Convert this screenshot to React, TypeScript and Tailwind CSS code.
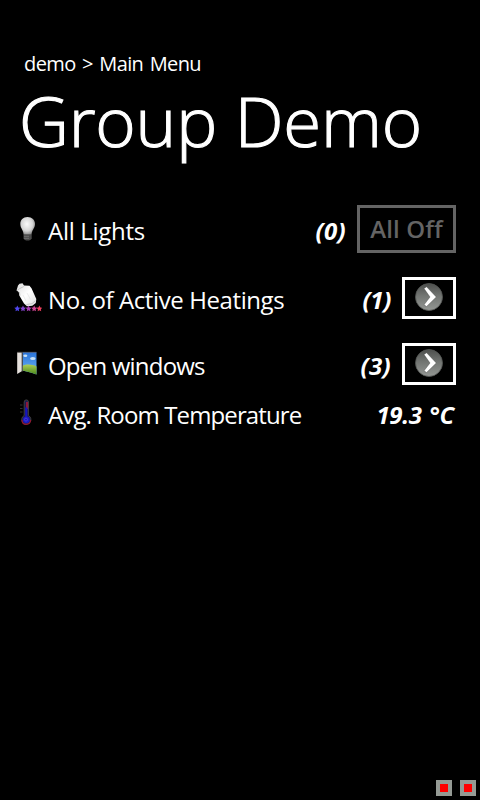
import type { ReactNode } from "react";

function BulbIcon() {
  return (
    <svg viewBox="0 0 26 30" className="h-[30px] w-[26px]">
      <defs>
        <radialGradient id="bulb" cx="0.45" cy="0.4" r="0.65">
          <stop offset="0" stopColor="#fafafa" />
          <stop offset="0.6" stopColor="#d4d4d4" />
          <stop offset="1" stopColor="#777" />
        </radialGradient>
      </defs>
      <path d="M13.500 3C9 3 6.300 6 6.300 10c0 4.600 3.300 5.800 3.300 10.800h8C17.600 15.800 21 14.500 21 10c0-4-2.900-7-7.500-7z" fill="url(#bulb)" />
      <path d="M9.500 20.800h8.200v3.700c-1 1.400-2 2-4.200 2s-3-.6-4-2z" fill="#4a4a4a" />
      <path d="M10 22.300h5M10 24.300h5" stroke="#808080" strokeWidth="0.700" />
    </svg>
  );
}

function HeatingIcon() {
  const stars = [
    { x: 3.300, color: "#5146f0" },
    { x: 9, color: "#8043cc" },
    { x: 14.600, color: "#a83cb4" },
    { x: 20.200, color: "#d04596" },
    { x: 25.400, color: "#f04060" },
  ];
  return (
    <svg viewBox="0 0 28 30" className="h-[30px] w-[28px]">
      <defs>
        <linearGradient id="valve" x1="0" y1="0" x2="1" y2="1">
          <stop offset="0" stopColor="#ddd" />
          <stop offset="0.500" stopColor="#fff" />
          <stop offset="1" stopColor="#dedede" />
        </linearGradient>
      </defs>
      <path d="M4 2.500L5.500.8l3-.5 1.500 2.200 5.500.3 2 2.500L22.300 16l-.5 4-3.500 2.800-5.300.4-3-2.700-4.700-8-.6-3.500L2.500 7.500z" fill="url(#valve)" />
      <path d="M3 7.500l2.800-2 4-2M6 12.500l-.7-3.500M12.500 21.500l5.500-.8 3.300-3" stroke="#b4b4b4" strokeWidth="0.700" fill="none" />
      <path d="M9 12l3 6M13 10l3.500 6.500" stroke="#e4e4e4" strokeWidth="0.700" fill="none" />
      {stars.map((s) => (
        <path key={s.x} transform={`translate(${s.x} 25.400) scale(1.2)`} d="M0-2.500L.8-.8 2.500-.6 1.200.7 1.500 2.400 0 1.500-1.500 2.400-1.200.7-2.500-.6-.8-.8z" fill={s.color} />
      ))}
    </svg>
  );
}

function WindowIcon() {
  return (
    <svg viewBox="0 0 28 30" className="h-[30px] w-[28px]">
      <defs>
        <linearGradient id="sky" x1="0" y1="0" x2="0" y2="1">
          <stop offset="0" stopColor="#2872da" />
          <stop offset="1" stopColor="#72b9f5" />
        </linearGradient>
        <linearGradient id="grass" x1="0" y1="0" x2="0" y2="1">
          <stop offset="0" stopColor="#b0cf55" />
          <stop offset="1" stopColor="#49891c" />
        </linearGradient>
      </defs>
      <path d="M8.500 3.200h14V25.500l-5-1.700-9-2.300z" fill="url(#sky)" />
      <path d="M8.500 16.700c4-2 10-1.500 14 .7v8.100l-5-1.700-9-2.300z" fill="url(#grass)" />
      <ellipse cx="11.300" cy="6.700" rx="2" ry="1.200" fill="#c8e2f8" />
      <ellipse cx="18.800" cy="9.500" rx="2.700" ry="1.600" fill="#c8e2f8" />
      <path d="M7.500 4v18.500h1.200V4z" fill="#55504c" />
      <path d="M3.200 3.500h4.500v18.700L3.200 25z" fill="#e6e1dd" />
      <path d="M3.200 3.300h19.300" fill="none" stroke="#77716c" strokeWidth="0.600" />
    </svg>
  );
}

function ThermometerIcon() {
  return (
    <svg viewBox="0 0 28 30" className="h-[30px] w-[28px]">
      <path d="M10.200 4a2.100 2.100 0 0 1 4.200 0v13.500a4.600 4.600 0 1 1-4.200 0z" fill="#1c1c50" stroke="#404040" strokeWidth="1" />
      <path d="M13 4v7" stroke="#a01838" strokeWidth="1.700" />
      <path d="M12.300 9.500V22" stroke="#1616c0" strokeWidth="2.100" />
      <path d="M8 22c0 5.800 8.200 5.800 8.600 0" stroke="#921632" strokeWidth="1.200" fill="none" />
      <circle cx="12.300" cy="21.800" r="3.400" fill="#1a1ac4" />
      <circle cx="12" cy="21.600" r="1.500" fill="none" stroke="#5a40dc" strokeWidth="0.700" />
      <path d="M6 7h2.500M6 10.500h2.500M6 14h2.500" stroke="#303030" strokeWidth="1" />
    </svg>
  );
}

function ArrowButton() {
  return (
    <button className="flex h-[42px] w-[54px] items-center justify-center border-3 border-white">
      <svg viewBox="0 0 28 28" className="mb-[2px] h-7 w-7">
        <defs>
          <linearGradient id="disc" x1="0" y1="0" x2="0" y2="1">
            <stop offset="0" stopColor="#4d4f4d" />
            <stop offset="0.450" stopColor="#727572" />
            <stop offset="1" stopColor="#949794" />
          </linearGradient>
        </defs>
        <circle cx="14" cy="14" r="13.500" fill="url(#disc)" stroke="#555855" strokeWidth="0.800" />
        <path d="M9 5.500l2.600-1.700 9.700 10.200-9.700 9.500L9 21.800l6-7.800z" fill="#fff" stroke="#3e403e" strokeWidth="0.400" />
      </svg>
    </button>
  );
}

interface RowProps {
  className: string;
  icon: ReactNode;
  label: string;
  labelClass: string;
  value: string;
  valueClass: string;
  action?: ReactNode;
}

function Row({ className, icon, label, labelClass, value, valueClass, action }: RowProps) {
  return (
    <div className={`flex items-center pl-[14px] pr-6 text-2xl leading-8 ${className}`}>
      <div className="flex w-[34px] shrink-0">{icon}</div>
      <span className={`mt-[3px] whitespace-nowrap ${labelClass}`}>{label}</span>
      <span className={`ml-auto mt-[3px] whitespace-nowrap font-bold italic ${valueClass}`}>{value}</span>
      {action}
    </div>
  );
}

export default function App() {
  return (
    <main className="flex h-[800px] w-[480px] flex-col overflow-hidden bg-black font-['Open_Sans','Noto_Sans',sans-serif] text-white">
      <header className="h-[168px] pt-[50px]">
        <p className="pl-6 text-[20px] leading-7 tracking-[-0.6px] [word-spacing:1.8px]">demo &gt; Main Menu</p>
        <h1 className="pl-[19px] text-[69px] font-light leading-[84px] tracking-[-0.2px] [-webkit-text-stroke:1.1px_white]">Group Demo</h1>
      </header>
      <section className="mt-[27px] flex flex-col">
        <Row
          className="h-[68px]"
          icon={<BulbIcon />}
          label="All Lights"
          labelClass="tracking-[-0.3px]"
          value="(0)"
          valueClass="mr-[11px] tracking-[0.3px]"
          action={
            <button disabled className="flex h-12 w-[99px] items-center justify-center border-3 border-[#646464] text-2xl font-semibold tracking-[0.1px] text-[#646464]">
              All Off
            </button>
          }
        />
        <Row
          className="h-[70px]"
          icon={<HeatingIcon />}
          label="No. of Active Heatings"
          labelClass="tracking-[-0.4px]"
          value="(1)"
          valueClass="mr-[11px] tracking-[-0.3px]"
          action={<ArrowButton />}
        />
        <Row
          className="h-[62px]"
          icon={<WindowIcon />}
          label="Open windows"
          labelClass="tracking-[-0.8px]"
          value="(3)"
          valueClass="mr-[11px] tracking-[0.3px]"
          action={<ArrowButton />}
        />
        <Row
          className="h-[36px]"
          icon={<ThermometerIcon />}
          label="Avg. Room Temperature"
          labelClass="tracking-[-0.87px]"
          value="19.3 °C"
          valueClass="mr-[2px] tracking-[-0.3px] [word-spacing:2px]"
        />
      </section>
      <footer className="mt-auto flex justify-end gap-2 pb-1 pr-1">
        <span className="size-4 border-4 border-[#949a94] bg-[#ff0000]" />
        <span className="size-4 border-4 border-[#949a94] bg-[#ff0000]" />
      </footer>
    </main>
  );
}
